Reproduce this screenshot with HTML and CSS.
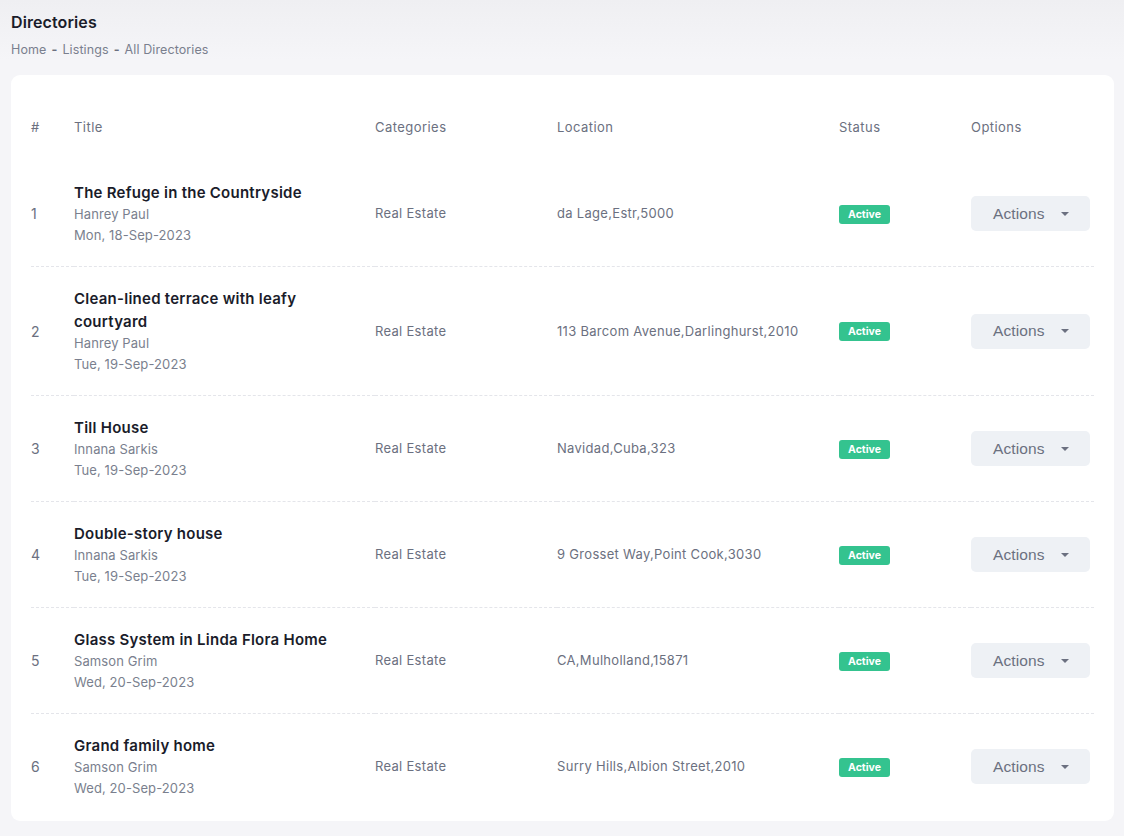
FILE: index.html
```html
<!DOCTYPE html>
<html>
<head>
<meta charset="utf-8">
<link rel="stylesheet" href="styles.css">
</head>
<body>
<div class="page">
  <div class="page-head">
    <h1 class="page-title">Directories</h1>
    <div class="crumbs"><span>Home</span><span class="sep">-</span><span>Listings</span><span class="sep">-</span><span>All Directories</span></div>
  </div>
  <div class="card">
    <table class="tbl">
      <colgroup>
        <col class="c-num"><col class="c-title"><col class="c-cat"><col class="c-loc"><col class="c-status"><col class="c-opt">
      </colgroup>
      <thead>
        <tr><th>#</th><th>Title</th><th>Categories</th><th>Location</th><th>Status</th><th>Options</th></tr>
      </thead>
      <tbody>
        <tr>
          <td class="num">1</td>
          <td><div class="t">The Refuge in the Countryside</div><div class="sub">Hanrey Paul</div><div class="sub">Mon, 18-Sep-2023</div></td>
          <td>Real Estate</td>
          <td>da Lage,Estr,5000</td>
          <td><span class="badge">Active</span></td>
          <td><button class="btn">Actions<span class="caret"></span></button></td>
        </tr>
        <tr>
          <td class="num">2</td>
          <td><div class="t">Clean-lined terrace with leafy courtyard</div><div class="sub">Hanrey Paul</div><div class="sub">Tue, 19-Sep-2023</div></td>
          <td>Real Estate</td>
          <td>113 Barcom Avenue,Darlinghurst,2010</td>
          <td><span class="badge">Active</span></td>
          <td><button class="btn">Actions<span class="caret"></span></button></td>
        </tr>
        <tr>
          <td class="num">3</td>
          <td><div class="t">Till House</div><div class="sub">Innana Sarkis</div><div class="sub">Tue, 19-Sep-2023</div></td>
          <td>Real Estate</td>
          <td>Navidad,Cuba,323</td>
          <td><span class="badge">Active</span></td>
          <td><button class="btn">Actions<span class="caret"></span></button></td>
        </tr>
        <tr>
          <td class="num">4</td>
          <td><div class="t">Double-story house</div><div class="sub">Innana Sarkis</div><div class="sub">Tue, 19-Sep-2023</div></td>
          <td>Real Estate</td>
          <td>9 Grosset Way,Point Cook,3030</td>
          <td><span class="badge">Active</span></td>
          <td><button class="btn">Actions<span class="caret"></span></button></td>
        </tr>
        <tr>
          <td class="num">5</td>
          <td><div class="t">Glass System in Linda Flora Home</div><div class="sub">Samson Grim</div><div class="sub">Wed, 20-Sep-2023</div></td>
          <td>Real Estate</td>
          <td>CA,Mulholland,15871</td>
          <td><span class="badge">Active</span></td>
          <td><button class="btn">Actions<span class="caret"></span></button></td>
        </tr>
        <tr>
          <td class="num">6</td>
          <td><div class="t">Grand family home</div><div class="sub">Samson Grim</div><div class="sub">Wed, 20-Sep-2023</div></td>
          <td>Real Estate</td>
          <td>Surry Hills,Albion Street,2010</td>
          <td><span class="badge">Active</span></td>
          <td><button class="btn">Actions<span class="caret"></span></button></td>
        </tr>
      </tbody>
    </table>
  </div>
</div>
</body>
</html>
```

FILE: styles.css
```css
* { box-sizing: border-box; }
html, body { margin: 0; padding: 0; }
body {
  background: linear-gradient(#efeff2 0, #f5f5f8 60px, #f5f5f8 100%);
  font-family: "Inter", "Open Sans", sans-serif;
  color: #6b7080;
  width: 1124px;
  height: 836px;
  overflow: hidden;
}
.page { padding: 12px 10px 0 11px; }
.page-head { height: 63px; }
.page-title {
  margin: 0;
  font-size: 16px;
  font-weight: 600;
  color: #1a1c2a;
  line-height: 20px;
  letter-spacing: 0.1px;
}
.crumbs {
  margin-top: 10px;
  font-size: 12.5px;
  color: #7a7f8e;
  line-height: 16px;
  display: flex;
  gap: 5px;
  letter-spacing: 0.1px;
}
.crumbs .sep { font-weight: 700; color: #6b7080; }
.card {
  background: #fff;
  border-radius: 9px;
  padding: 20px 20px 0 20px;
  height: 746px;
}
.tbl {
  width: 1063px;
  border-collapse: collapse;
  table-layout: fixed;
}
.c-num { width: 43px; }
.c-title { width: 301px; }
.c-cat { width: 182px; }
.c-loc { width: 282px; }
.c-status { width: 132px; }
.c-opt { width: 123px; }
th {
  text-align: left;
  font-weight: 400;
  font-size: 13px;
  color: #6b7080;
  padding: 23px 0 23px;
  line-height: 19px;
  letter-spacing: 0.45px;
}
td {
  font-size: 13px;
  color: #6b7080;
  padding: 20px 0 20px;
  vertical-align: middle;
  line-height: 21px;
  letter-spacing: 0.3px;
  border-top: 1px dashed #e4e5ea;
}
tbody tr:first-child td { border-top-color: transparent; }
.num { font-size: 14px; }
.t {
  font-size: 15px;
  font-weight: 600;
  color: #1a1c2a;
  line-height: 23px;
  padding-right: 30px;
  letter-spacing: 0.25px;
}
.sub { font-size: 13px; color: #7a7f8e; line-height: 21px; letter-spacing: 0.1px; }
.badge {
  display: inline-block;
  background: #34c38f;
  color: #fff;
  font-size: 10.5px;
  font-weight: 700;
  line-height: 19px;
  height: 19px;
  width: 51px;
  text-align: center;
  padding: 0;
  letter-spacing: 0;
  border-radius: 3px;
  vertical-align: middle;
}
.btn {
  display: inline-flex;
  align-items: center;
  justify-content: flex-start;
  width: 119px;
  height: 35px;
  border: 0;
  border-radius: 5px;
  background: #eef1f5;
  color: #6b7080;
  font-family: "Liberation Sans", Arial, sans-serif;
  font-size: 15.5px;
  letter-spacing: 0.1px;
  padding: 0 0 0 22px;
  vertical-align: middle;
}
.caret {
  display: inline-block;
  margin-left: 16px;
  width: 0;
  height: 0;
  border-left: 4px solid transparent;
  border-right: 4px solid transparent;
  border-top: 4px solid #6b7080;
}
```
